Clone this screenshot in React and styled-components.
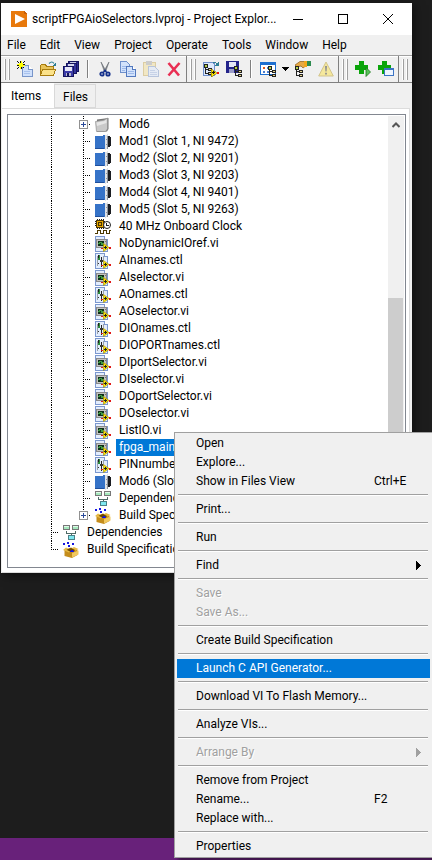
import React from "react";
import styled, { createGlobalStyle, css } from "styled-components";

const Global = createGlobalStyle`
  * { box-sizing: border-box; }
  html, body { margin: 0; background: #1d1d1d; overflow: hidden; }
  body, button { font-family: Roboto, "Open Sans", sans-serif; font-size: 12px; color: #000; }
  button { margin: 0; padding: 0; border: 0; background: none; text-align: left; }
  ul { margin: 0; padding: 0; list-style: none; }
`;

const Desktop = styled.div`
  position: relative;
  min-height: 100vh;
  display: flex;
  flex-direction: column;
  overflow: hidden;
`;
const StatusStrip = styled.footer`
  height: 22px;
  margin-top: auto;
  background: #68217a;
`;
const Window = styled.main`
  margin: 3px 20px 0 1px;
  background: #f0f0f0;
  box-shadow: 2px 2px 10px #0008;
`;

const TitleBar = styled.header`
  display: flex;
  align-items: center;
  height: 32px;
  padding: 0 2px 0 10px;
  background: #fff;
`;
const Title = styled.h1`
  flex: 1;
  min-width: 0;
  margin: 0 0 0 5px;
  font-size: 12px;
  font-weight: 400;
  line-height: 16px;
  white-space: nowrap;
`;
const CaptionButtons = styled.div`
  display: flex;
`;
const CaptionButton = styled.button`
  display: grid;
  place-items: center;
  width: 45px;
  height: 30px;
`;

const MenuBar = styled.nav`
  display: flex;
  height: 20px;
  gap: 14px;
  padding-left: 6px;
`;
const MenuBarItem = styled.button`
  line-height: 18px;
`;

const ToolBar = styled.div`
  display: flex;
  height: 28px;
  border-top: 1px solid #a0a0a0;
  border-bottom: 1px solid #808080;
  box-shadow: inset 0 1px #fff;
`;
const ToolGroup = styled.div`
  display: flex;
  align-items: center;
  padding: 0 1px 0 12px;
  border-right: 1px solid #808080;
  background:
    linear-gradient(90deg, #fff 1px, #a0a0a0 1px, #a0a0a0 2px, #0000 2px, #0000 4px, #fff 4px, #fff 5px, #a0a0a0 5px, #a0a0a0 6px, #0000 6px)
    no-repeat 3px 3px / 8px 21px;
  &:last-child { border-right: 0; }
`;
const ToolButton = styled.button`
  display: grid;
  place-items: center;
  width: ${(p) => (p.$narrow ? 12 : 23)}px;
  height: 22px;
  opacity: ${(p) => (p.disabled ? 0.5 : 1)};
`;
const ToolDivider = styled.span`
  width: 2px;
  height: 18px;
  margin: 0 4px 0 5px;
  border-left: 1px solid #808080;
  border-right: 1px solid #fff;
`;

const Tabs = styled.div`
  display: flex;
  align-items: flex-end;
  height: 25px;
  padding-left: 1px;
`;
const Tab = styled.button`
  ${(p) =>
    p.$active
      ? css`
          height: 25px;
          width: 52px;
          padding: 0 0 0 9px;
          background: #fff;
        `
      : css`
          height: 24px;
          width: 42px;
          padding: 2px 0 0 8px;
          border: 1px solid #d9d9d9;
        `}
`;
const TabPanel = styled.section`
  margin: 0 2px 0 1px;
  padding: 5px 3px 4px 5px;
  border: 1px solid #dcdcdc;
  border-left: 0;
  background: #fff;
`;
const TreeFrame = styled.div`
  display: flex;
  min-height: 454px;
  border: 1px solid #828790;
  padding: 1px 1px 1px 0;
`;
const Tree = styled.ul`
  flex: 1;
  min-width: 0;
  padding-left: 43px;
`;
const TreeRow = styled.li`
  display: flex;
  align-items: center;
  height: 17px;
`;
const dotsDown = "repeating-linear-gradient(180deg, #000 0 1px, #0000 1px 2px)";
const dotsAcross = "repeating-linear-gradient(90deg, #000 0 1px, #0000 1px 2px)";
const Guide = styled.span`
  width: 32px;
  height: 17px;
  background: ${dotsDown} no-repeat 0 0 / 1px 100%;
`;
const Branch = styled.span`
  position: relative;
  width: 12px;
  height: 17px;
  background:
    ${dotsDown} no-repeat 0 0 / 1px ${(p) => (p.$last ? "9px" : "100%")},
    ${dotsAcross} no-repeat 0 8px / 8px 1px;
`;
const Expander = styled.button`
  position: absolute;
  left: -4px;
  top: 4px;
  display: block;
  height: 9px;
  svg { display: block; }
`;
const TreeLabel = styled.span`
  margin-left: 5px;
  padding: 0 3px;
  line-height: 17px;
  white-space: nowrap;
  background: ${(p) => (p.$selected ? "#0078d7" : "none")};
  color: ${(p) => (p.$selected ? "#fff" : "#000")};
`;
const ScrollTrack = styled.div`
  display: flex;
  flex-direction: column;
  width: 16px;
  background: #f0f0f0;
`;
const ScrollArrow = styled.button`
  display: grid;
  place-items: center;
  height: 17px;
`;
const ScrollThumb = styled.div`
  flex: 1;
  width: 15px;
  margin: 165px 0 17px;
  background: #cdcdcd;
`;

const ContextMenu = styled.div`
  position: absolute;
  left: 174px;
  right: -1px;
  top: 432px;
  padding: 1px 2px;
  border: 1px solid #a0a0a0;
  background: #f0f0f0;
  box-shadow: 4px 4px 4px #0006;
`;
const MenuItem = styled.button`
  display: flex;
  align-items: center;
  width: 100%;
  height: 19px;
  padding: 0 9px 1px 19px;
  line-height: 16px;
  background: ${(p) => (p.$active ? "#0078d7" : "none")};
  color: ${(p) => (p.$active ? "#fff" : "#000")};
  &:disabled { color: #a0a0a0; text-shadow: 1px 1px #fff; }
`;
const ItemText = styled.span`
  flex: 1;
  white-space: nowrap;
`;
const Shortcut = styled.span`
  width: 47px;
`;
const MenuSeparator = styled.hr`
  height: 2px;
  margin: 3px 2px 4px 1px;
  border: 0;
  border-top: 1px solid #a0a0a0;
  background: #fff;
`;

const Svg = ({ w = 16, h = 16, children, smooth }) => (
  <svg width={w} height={h} viewBox={`0 0 ${w} ${h}`} fill="none" aria-hidden="true"
    shapeRendering={smooth ? "auto" : "crispEdges"}>{children}</svg>
);

const LogoIcon = () => (
  <Svg><path fill="#e8790c" d="M0 0h13l3 3v13H0z" /><path fill="#c9600a" d="M13 0v3h3z" />
    <path shapeRendering="auto" fill="#fff" d="M4 3l10 5-10 5z" /></Svg>
);

const TreeGlyph = ({ x, y }) => (
  <g transform={`translate(${x} ${y})`}>
    <path stroke="#222" d="M1.5 2v8M1 5.5h4M1 9.5h4" />
    <path fill="#222" d="M0 0h4v4H0zM4 4h4v3H4zM4 8h4v3H4z" />
    <path fill="#b5d14a" d="M1 1h2v2H1z" /><path fill="#e5d58a" d="M5 5h2v1H5zM5 9h2v1H5z" />
  </g>
);

const NewIcon = () => (
  <Svg><path fill="#cfe0fb" stroke="#7895c9" d="M5.5 4.5h6l4 4v7h-10z" /><path fill="#fff" stroke="#7895c9" d="M11.5 4.5v4h4" />
    <path stroke="#a8c2ee" d="M7 10.5h6M7 12.5h6" />
    <path fill="#ff0" d="M2 2h4v4H2zM0 3h8v2H0zM3 0h2v8H3z" />
    <path fill="#111" d="M0 0h1v1H0zM1 1h1v1H1zM3 0h1v2H3zM6 1h1v1H6zM7 0h1v1H7zM0 4h2v1H0zM6 3h2v1H6zM1 6h1v1H1zM0 7h1v1H0zM4 6h1v2H4zM6 6h1v1H6z" /></Svg>
);
const OpenIcon = () => (
  <Svg><path fill="#e8c45a" stroke="#a87d10" d="M.5 14.5v-10l1-1h4l1 2h7v9z" />
    <path fill="#fbe28a" stroke="#a87d10" d="M.5 14.5l2-6h13l-2 6z" />
    <path stroke="#2d7f94" strokeWidth="1.2" shapeRendering="auto" d="M9 2.5q3-3 5 0" /><path fill="#2d7f94" d="M16 1v4h-4z" /></Svg>
);
const SaveAllIcon = () => (
  <Svg>
    <path fill="#2c2c91" stroke="#15155e" d="M5.5.5h10v10h-10z" /><path fill="#c9cbe6" d="M7 1h6v3H7z" />
    <path fill="#34349c" stroke="#15155e" d="M3.5 2.5h10v10h-10z" /><path fill="#d4d6ee" d="M5 3h6v3H5z" />
    <path fill="#3c3ca8" stroke="#15155e" d="M.5 5.5h10v10H.5z" /><path fill="#e8e8f8" d="M2 6h7v4H2z" /><path fill="#b9bbcf" d="M3 12h5v3H3z" />
    <path fill="#15155e" d="M4 12h2v3H4z" /></Svg>
);
const CutIcon = () => (
  <Svg smooth><path fill="#8a8f96" stroke="#555a60" strokeWidth=".5" d="M4 1l5 9-1.5 1zM12 1l-5 9 1.5 1z" />
    <circle cx="5" cy="13" r="1.7" stroke="#15318c" strokeWidth="1.8" /><circle cx="11" cy="13" r="1.7" stroke="#15318c" strokeWidth="1.8" />
    <path stroke="#15318c" strokeWidth="1.6" d="M6 11.5l3-2.5M10 11.5L7 9" /></Svg>
);
const CopyIcon = () => (
  <Svg>
    <path fill="#d2e2fb" stroke="#6e8fcb" d="M.5.5h6l3 3v8h-9z" /><path stroke="#9db9ea" d="M2 5.5h5M2 7.5h5M2 9.5h3" />
    <path fill="#d2e2fb" stroke="#5379bf" d="M6.5 5.5h6l3 3v7h-9z" /><path fill="#fff" stroke="#5379bf" d="M12.5 5.5v3h3" />
    <path stroke="#9db9ea" d="M8 10.5h6M8 12.5h6" /></Svg>
);
const PasteIcon = () => (
  <Svg><rect x=".5" y="1.5" width="12" height="13" rx="1" fill="#f3e09a" stroke="#c9ac58" /><path fill="#aaa" d="M3 0h6v4H3z" />
    <path fill="#dce8fb" stroke="#8099c9" d="M5.5 5.5h6l4 4v6h-10z" /><path stroke="#a0b6e0" d="M7 9.5h5M7 11.5h7M7 13.5h7" /></Svg>
);
const DeleteIcon = () => (
  <Svg smooth><path stroke="#e92f53" strokeWidth="2.6" d="M2.5 2L13 14.5M13.5 2L2.5 14.5" /></Svg>
);
const ResolveIcon = () => (
  <Svg><path fill="#dde9fb" stroke="#6e8fcb" d="M.5 1.5h10l1 2v11H.5z" />
    <TreeGlyph x={1} y={3} />
    <path stroke="#2d7f94" d="M10 1.5h2l2 1" /><path fill="#2d7f94" d="M16 0v5h-4z" />
    <path fill="#ffe600" stroke="#7d6c00" strokeWidth=".6" d="M8 8l6 4-6 4z" /><path fill="#e11" d="M14 11h2v2h-2z" /><path fill="#111" d="M9 11h3v1H9zM10 10h1v3h-1z" /></Svg>
);
const SaveTreeIcon = () => (
  <Svg><path fill="#23238a" d="M0 0h13v12H0z" /><path fill="#e4e6f6" d="M3 1h7v5H3z" /><path fill="#9a9cc8" d="M3 8h5v4H3z" /><TreeGlyph x={8} y={5} /></Svg>
);
const ViewIcon = () => (
  <Svg><path fill="#fff" stroke="#1d6fd0" d="M.5 1.5h15v12H.5z" /><path fill="#1d6fd0" d="M0 1h16v3H0z" />
    <path fill="#e05a20" d="M3 6h2v2H3z" /><path fill="#4a7dd0" d="M7 6h2v2H7zM3 10h2v2H3zM7 10h2v2H7z" /><TreeGlyph x={8} y={5} /></Svg>
);
const DownIcon = () => <Svg w={7} h={4}><path fill="#000" d="M0 0h7L3.5 4z" /></Svg>;
const HandIcon = () => (
  <Svg><path fill="#e7a945" stroke="#8a5a18" strokeWidth=".7" shapeRendering="auto" d="M0 4l5-3.5h5v5L8 7 6 5 2 6z" />
    <path fill="#2e8b4f" d="M11 0h5v5h-5z" /><path fill="#f2a71b" d="M9 0h3v6H9z" />
    <TreeGlyph x={0} y={5} /></Svg>
);
const WarnIcon = () => (
  <Svg smooth><path fill="#fbe14a" stroke="#b89b2a" strokeLinejoin="round" d="M8 1l7.3 14H.7z" />
    <path fill="#333" d="M7 5h2l-.4 5.5H7.4zM7.1 11.8h1.8v1.8H7.1z" /></Svg>
);
const PlusRunIcon = () => (
  <Svg><path fill="#0aa50a" d="M4 0h5v4h4v5H9v4H4V9H0V4h4z" /><path fill="#58c058" stroke="#1d7a1d" strokeWidth=".8" shapeRendering="auto" d="M11 6.5l4.5 4.5-4.5 4.5z" /></Svg>
);
const PlusWindowIcon = () => (
  <Svg><path fill="#0aa50a" d="M4 0h5v4h4v5H9v4H4V9H0V4h4z" /><path fill="#eef5ff" stroke="#3c74c4" d="M6.5 7.5h9v7h-9z" /><path fill="#3c74c4" d="M6 7h10v2H6z" /></Svg>
);

const FolderIcon = () => (
  <Svg smooth><path fill="#777" d="M2 2.5L13.5 1v11L12 14.5 2 15z" />
    <path fill="#c9c9c9" stroke="#8f8f8f" strokeWidth=".7" d="M.5 4.5L9 3l3.5-2V12L10.5 14.5H1.5z" />
    <path fill="#e6e6e6" d="M1.5 5.5L9.5 4l2-1.5V6L2 9z" /></Svg>
);
const ModuleIcon = () => (
  <Svg><path fill="#3673c8" d="M0 2h8V1h2v14H1v-1H0z" /><path fill="#1f4f9c" d="M0 14h9v1H0z" />
    <path fill="#dfe2e6" d="M10 1h2V0h1v15h-2v1h-1z" /><path fill="#8d939c" d="M12 2h1v13h-1zM11 5h1v1h-1zM11 10h1v1h-1z" />
    <path fill="#1b1d22" d="M13 2h2v1h1v9h-1v1h-2z" /></Svg>
);
const ClockIcon = () => (
  <Svg><path fill="#222" d="M2 0h1v10H2zM4 0h1v10H4zM6 0h1v10H6zM8 0h1v10H8zM0 2h10v1H0zM0 4h10v1H0zM0 6h10v1H0z" />
    <path fill="#e6a800" stroke="#4a3500" d="M1.5 1.5h7v7h-7z" /><path stroke="#4a3500" d="M3.5 3.5h3v3h-3z" />
    <circle cx="12" cy="6" r="3.5" fill="#fff" stroke="#222" shapeRendering="auto" /><path stroke="#222" d="M11.5 4v2.5h2" />
    <path stroke="#4d3a00" d="M0 14.5h2.5v-3h3v3h3v-3h3v3h2.5v-3h2" /></Svg>
);
const PageBase = () => (
  <><path fill="#e3edfd" stroke="#7c98cf" d="M.5.5h9l3 3v12H.5z" /><path fill="#fff" stroke="#7c98cf" d="M9.5.5v3h3" /></>
);
const YellowArrow = () => (
  <><path fill="#ffe600" stroke="#a08800" strokeWidth=".6" shapeRendering="auto" d="M8.5 7.5l5.5 4-5.5 4z" />
    <path fill="#e01818" d="M14 11h2v2h-2zM6 12h2v1H6z" /><path fill="#222" d="M9 11h3v1H9zM10 10h1v3h-1z" /></>
);
const ViIcon = () => (
  <Svg><PageBase /><path fill="#c2c2c2" stroke="#8a8a8a" d="M1.5 3.5h10v8h-10z" /><path fill="#10301a" d="M3 5h6v5H3z" />
    <path stroke="#3f9c46" d="M3 7.5h1.5v-1h1.5v2h1.5v-1H9" /><path fill="#777" d="M10 5h1v1h-1z" /><YellowArrow /></Svg>
);
const CtlIcon = () => (
  <Svg><PageBase /><path fill="#9aa0a8" d="M2 3h1v10H2zM8 3h1v5H8z" /><path fill="#222" d="M3 2h1v5H3zM6 4h1v10H6z" />
    <path fill="#2a8a3a" d="M4 2h1v3H4zM3 5h2v2H3z" /><path fill="#333" d="M5 7h3v2H5zM3 10h1v1H3z" /><YellowArrow /></Svg>
);
const DependIcon = () => (
  <Svg><path stroke="#4f6b66" d="M3.5 6v2.5h9V6M8.5 8.5V11" />
    <path fill="#a4e8bc" stroke="#777" d="M.5.5h6v4h-6zM9.5.5h6v4h-6z" /><path fill="#7fe8f0" stroke="#4c8288" d="M5.5 10.5h6v4h-6z" />
    <path fill="#e0f8e8" d="M1 1h5v1H1zM10 1h5v1h-5z" /></Svg>
);
const BuildIcon = () => (
  <Svg smooth><path fill="#c48d1c" d="M1.5 8L8 5.5 14.5 8v5L9 16l-7.5-2z" /><path fill="#e8ba45" d="M0 8l3-2.5L8 8l-2 2.5zM15.5 7L11 5 8.5 6.5 12 9z" />
    <path fill="#6b4700" d="M3.5 7.8L8 6l4.5 2.3L8 10z" /><path fill="#f0c860" d="M9 11l6.5-2.5v4L9 15.5z" />
    <path shapeRendering="crispEdges" fill="#1515e0" d="M0 1h2v2H0zM4 0h2v2H4zM5 3h2v2H5zM9 1h2v2H9zM8 8h2v1h1v1H7V9h1z" /></Svg>
);

const toolGroups = [
  [["New", NewIcon], ["Open", OpenIcon], ["Save All", SaveAllIcon], null, ["Cut", CutIcon], ["Copy", CopyIcon], ["Paste", PasteIcon, "disabled"], ["Delete", DeleteIcon]],
  [["Resolve Conflicts", ResolveIcon], ["Save Project", SaveTreeIcon], null, ["View Options", ViewIcon], ["More Views", DownIcon, "narrow"], ["Properties", HandIcon], ["Warnings", WarnIcon, "disabled"]],
  [["Add and Run", PlusRunIcon], ["Add Window", PlusWindowIcon]],
  [],
];

const rows = [
  ["Mod6", FolderIcon, { expandable: true }],
  ["Mod1 (Slot 1, NI 9472)", ModuleIcon],
  ["Mod2 (Slot 2, NI 9201)", ModuleIcon],
  ["Mod3 (Slot 3, NI 9203)", ModuleIcon],
  ["Mod4 (Slot 4, NI 9401)", ModuleIcon],
  ["Mod5 (Slot 5, NI 9263)", ModuleIcon],
  ["40 MHz Onboard Clock", ClockIcon],
  ["NoDynamicIOref.vi", ViIcon],
  ["AInames.ctl", CtlIcon],
  ["AIselector.vi", ViIcon],
  ["AOnames.ctl", CtlIcon],
  ["AOselector.vi", ViIcon],
  ["DIOnames.ctl", CtlIcon],
  ["DIOPORTnames.ctl", CtlIcon],
  ["DIportSelector.vi", ViIcon],
  ["DIselector.vi", ViIcon],
  ["DOportSelector.vi", ViIcon],
  ["DOselector.vi", ViIcon],
  ["ListIO.vi", ViIcon],
  ["fpga_main.vi", ViIcon, { selected: true }],
  ["PINnumbers.ctl", CtlIcon],
  ["Mod6 (Slot 6)", ModuleIcon],
  ["Dependencies", DependIcon],
  ["Build Specifications", BuildIcon, { expandable: true, last: true }],
  ["Dependencies", DependIcon, { top: true }],
  ["Build Specifications", BuildIcon, { top: true, last: true }],
];

const menu = [
  ["Open"], ["Explore..."], ["Show in Files View", { keys: "Ctrl+E" }], null,
  ["Print..."], null,
  ["Run"], null,
  ["Find", { submenu: true }], null,
  ["Save", { disabled: true }], ["Save As...", { disabled: true }], null,
  ["Create Build Specification"], null,
  ["Launch C API Generator...", { active: true }], null,
  ["Download VI To Flash Memory..."], null,
  ["Analyze VIs..."], null,
  ["Arrange By", { submenu: true, disabled: true }], null,
  ["Remove from Project"], ["Rename...", { keys: "F2" }], ["Replace with..."], null,
  ["Properties"],
];

export default function App() {
  return (
    <Desktop>
      <Global />
      <Window>
        <TitleBar>
          <LogoIcon />
          <Title>scriptFPGAioSelectors.lvproj - Project Explor...</Title>
          <CaptionButtons>
            <CaptionButton aria-label="Minimize"><Svg w={10} h={10}><path stroke="#000" d="M0 5.5h10" /></Svg></CaptionButton>
            <CaptionButton aria-label="Maximize"><Svg w={10} h={10}><path stroke="#000" d="M.5.5h9v9h-9z" /></Svg></CaptionButton>
            <CaptionButton aria-label="Close"><Svg w={10} h={10} smooth><path stroke="#000" d="M0 0l10 10M10 0L0 10" /></Svg></CaptionButton>
          </CaptionButtons>
        </TitleBar>
        <MenuBar>
          {["File", "Edit", "View", "Project", "Operate", "Tools", "Window", "Help"].map((m) => (
            <MenuBarItem key={m}>{m}</MenuBarItem>
          ))}
        </MenuBar>
        <ToolBar role="toolbar">
          {toolGroups.map((group, g) => (
            <ToolGroup key={g}>
              {group.map((tool, i) => {
                if (!tool) return <ToolDivider key={i} />;
                const [name, Icon, mode] = tool;
                return (
                  <ToolButton key={i} aria-label={name} disabled={mode === "disabled"} $narrow={mode === "narrow"}>
                    <Icon />
                  </ToolButton>
                );
              })}
            </ToolGroup>
          ))}
        </ToolBar>
        <Tabs role="tablist">
          <Tab role="tab" aria-selected="true" $active>Items</Tab>
          <Tab role="tab" aria-selected="false">Files</Tab>
        </Tabs>
        <TabPanel role="tabpanel">
          <TreeFrame>
            <Tree role="tree">
              {rows.map(([label, Icon, o = {}], i) => (
                <TreeRow key={i} role="treeitem" aria-selected={!!o.selected}>
                  {!o.top && <Guide />}
                  <Branch $last={o.last}>
                    {o.expandable && (
                      <Expander aria-label={`Expand ${label}`}>
                        <Svg w={9} h={9}><path fill="#fff" stroke="#919191" d="M.5.5h8v8h-8z" /><path stroke="#2a4a9a" d="M2 4.5h5M4.5 2v5" /></Svg>
                      </Expander>
                    )}
                  </Branch>
                  <Icon />
                  <TreeLabel $selected={o.selected}>{label}</TreeLabel>
                </TreeRow>
              ))}
            </Tree>
            <ScrollTrack>
              <ScrollArrow aria-label="Scroll up"><Svg w={8} h={6} smooth><path stroke="#555" strokeWidth="2" d="M.5 5L4 1.5 7.5 5" /></Svg></ScrollArrow>
              <ScrollThumb />
            </ScrollTrack>
          </TreeFrame>
        </TabPanel>
      </Window>
      <StatusStrip />
      <ContextMenu role="menu">
        {menu.map((entry, i) => {
          if (!entry) return <MenuSeparator key={i} />;
          const [text, o = {}] = entry;
          return (
            <MenuItem key={i} role="menuitem" disabled={o.disabled} $active={o.active}>
              <ItemText>{text}</ItemText>
              {o.keys && <Shortcut>{o.keys}</Shortcut>}
              {o.submenu && <Svg w={5} h={9}><path fill={o.disabled ? "#a0a0a0" : "#000"} d="M0 0l5 4.5L0 9z" /></Svg>}
            </MenuItem>
          );
        })}
      </ContextMenu>
    </Desktop>
  );
}
